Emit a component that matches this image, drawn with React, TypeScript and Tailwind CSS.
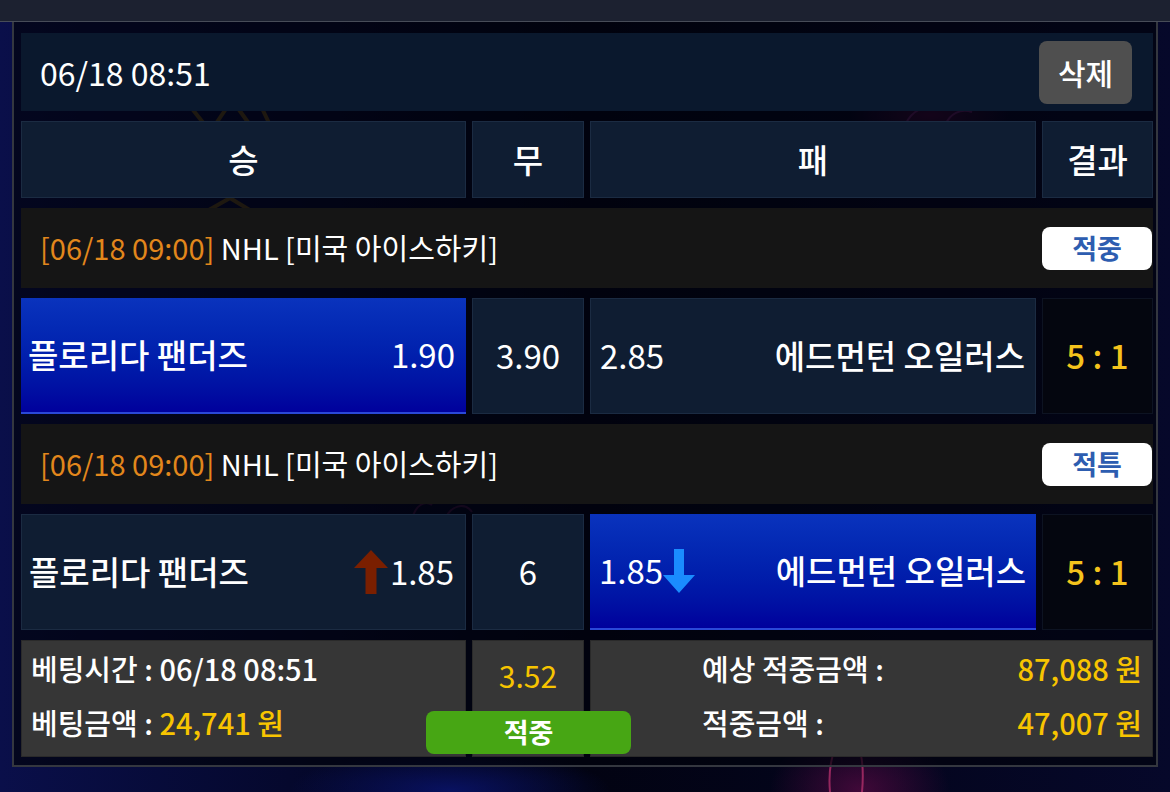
import React from 'react';

const FONT = { fontFamily: '"Noto Sans CJK KR", "Noto Sans", sans-serif' };

type Match = {
    time: string;
    league: string;
    badge: string;
    home: string;
    homeOdds: string;
    draw: string;
    away: string;
    awayOdds: string;
    score: string;
    pick: 'home' | 'away';
    homeArrow?: 'up' | 'down';
    awayArrow?: 'up' | 'down';
};

const matches: Match[] = [
    { time: '[06/18 09:00]', league: 'NHL [미국 아이스하키]', badge: '적중', home: '플로리다 팬더즈', homeOdds: '1.90', draw: '3.90', away: '에드먼턴 오일러스', awayOdds: '2.85', score: '5 : 1', pick: 'home' },
    { time: '[06/18 09:00]', league: 'NHL [미국 아이스하키]', badge: '적특', home: '플로리다 팬더즈', homeOdds: '1.85', draw: '6', away: '에드먼턴 오일러스', awayOdds: '1.85', score: '5 : 1', pick: 'away', homeArrow: 'up', awayArrow: 'down' },
];

function ArrowUp() {
    return (
        <svg width="34" height="44" viewBox="0 0 34 44" className="shrink-0 mr-[2px]">
            <path d="M17 0 L34 18 L22.5 18 L22.5 44 L11.5 44 L11.5 18 L0 18 Z" fill="#7a1f00" />
        </svg>
    );
}

function ArrowDown() {
    return (
        <svg width="32" height="44" viewBox="0 0 32 44" className="shrink-0">
            <path d="M11 0 L21 0 L21 26 L32 26 L16 44 L0 26 L11 26 Z" fill="#1a8cff" />
        </svg>
    );
}

const selectedCls = 'bg-gradient-to-b from-[#0a33bd] to-[#00009c] border-b-2 border-[#2a48d8]';
const plainCls = 'bg-[#0f1d32] border border-[#1b2b42]';

function MatchBlock({ m }: { m: Match }) {
    return (
        <>
            <div className="h-[80px] bg-[#151515] flex items-center justify-between pl-[19px] pr-[1px]">
                <div className="text-[29px] text-white">
                    <span className="text-[#e2871c]">{m.time}</span> {m.league}
                </div>
                <div className="w-[110px] h-[43px] rounded-[8px] bg-white flex items-center justify-center text-[27px] font-bold text-[#2d5db0]">
                    {m.badge}
                </div>
            </div>
            <div className="grid grid-cols-[445px_112px_446px_111px] gap-x-[6px] h-[116px]">
                <div className={`${m.pick === 'home' ? selectedCls : plainCls} flex items-center justify-between pl-[7px] pr-[11px] text-white`}>
                    <span className="text-[33px] font-medium">{m.home}</span>
                    <span className="flex items-center text-[33px]">
                        {m.homeArrow === 'up' && <ArrowUp />}
                        {m.homeOdds}
                    </span>
                </div>
                <div className={`${plainCls} flex items-center justify-center text-white text-[33px]`}>{m.draw}</div>
                <div className={`${m.pick === 'away' ? selectedCls : plainCls} flex items-center justify-between pl-[9px] pr-[10px] text-white`}>
                    <span className="flex items-center text-[33px]">
                        {m.awayOdds}
                        {m.awayArrow === 'down' && <ArrowDown />}
                    </span>
                    <span className="text-[33px] font-medium">{m.away}</span>
                </div>
                <div className="bg-[#04060f] border border-[#0d1322] flex items-center justify-center text-[33px] font-medium text-[#f5c31c]">
                    {m.score}
                </div>
            </div>
        </>
    );
}

function Backdrop() {
    return (
        <svg className="absolute inset-0 pointer-events-none" width="1170" height="792" viewBox="0 0 1170 792">
            <defs>
                <radialGradient id="glowPink" cx="0.5" cy="0.5" r="0.5">
                    <stop offset="0" stopColor="#5a0a44" stopOpacity="0.7" />
                    <stop offset="1" stopColor="#5a0a44" stopOpacity="0" />
                </radialGradient>
                <radialGradient id="glowBlue" cx="0.5" cy="0.5" r="0.5">
                    <stop offset="0" stopColor="#0a1470" stopOpacity="0.8" />
                    <stop offset="1" stopColor="#0a1470" stopOpacity="0" />
                </radialGradient>
            </defs>
            <ellipse cx="860" cy="790" rx="90" ry="60" fill="url(#glowPink)" />
            <ellipse cx="450" cy="790" rx="160" ry="40" fill="url(#glowBlue)" />
            <ellipse cx="930" cy="115" rx="80" ry="30" fill="url(#glowPink)" />
            <path d="M185 100 L205 125 M215 125 L232 100 L250 125 M258 100 L270 125" stroke="#8a6a10" strokeWidth="4" fill="none" opacity="0.7" />
            <path d="M200 215 L230 198 L258 215" stroke="#8a6a10" strokeWidth="4" fill="none" opacity="0.7" />
            <path d="M830 792 C 828 770 832 755 836 745 M862 792 C 864 770 862 755 858 745" stroke="#b0306a" strokeWidth="2" fill="none" opacity="0.8" />
            <path d="M905 125 C 912 110 925 104 940 108 M945 125 C 950 114 960 108 972 112" stroke="#7a2a7a" strokeWidth="2" fill="none" opacity="0.7" />
            <path d="M412 520 C 415 505 425 500 432 505 M445 520 C 450 505 465 502 472 512" stroke="#5a1a50" strokeWidth="2" fill="none" opacity="0.7" />
        </svg>
    );
}

export default function App() {
    return (
        <div className="relative w-[1170px] h-[792px] overflow-hidden bg-[#020312]" style={FONT}>
            <div className="absolute inset-0 bg-gradient-to-r from-[#0a0f4a] via-[#020312] to-[#06082a]" />
            <Backdrop />
            <div className="relative">
                <div className="h-[22px] bg-[#1c2130] border-b border-[#474c58]" />
                <div className="ml-[12px] w-[1146px] border-l-2 border-r-2 border-b-2 border-[#34373f] bg-[#02030d]/70 pt-[11px] pl-[7px] pr-[3px] pb-[8px] flex flex-col gap-[10px]">
                    <div className="h-[78px] bg-[#0a182d] flex items-center justify-between pl-[19px] pr-[21px]">
                        <span className="text-[32px] text-white">06/18 08:51</span>
                        <button className="w-[93px] h-[63px] rounded-[8px] bg-[#4f4f4f] text-white text-[30px] font-medium">삭제</button>
                    </div>
                    <div className="grid grid-cols-[445px_112px_446px_111px] gap-x-[6px] h-[77px]">
                        {['승', '무', '패', '결과'].map(h => (
                            <div key={h} className={`${plainCls} flex items-center justify-center text-white text-[33px] font-medium`}>{h}</div>
                        ))}
                    </div>
                    {matches.map((m, i) => <MatchBlock key={i} m={m} />)}
                    <div className="relative grid grid-cols-[445px_112px_446px_111px] gap-x-[6px] h-[117px]">
                        <div className="bg-[#363636] border border-[#2a2a2a] flex flex-col pt-[7px] gap-[14px] pl-[9px] text-white text-[29px] font-medium">
                            <div className="leading-[40px]">베팅시간 : 06/18 08:51</div>
                            <div className="leading-[40px]">베팅금액 : <span className="text-[#f7c400]">24,741 원</span></div>
                        </div>
                        <div className="bg-[#363636] border border-[#2a2a2a] flex justify-center pt-[14px] text-[30px] leading-[40px] text-[#f7c400]">3.52</div>
                        <div className="col-span-2 bg-[#363636] border border-[#2a2a2a] flex flex-col pt-[7px] gap-[14px] pl-[111px] pr-[10px] text-[29px] font-medium">
                            <div className="flex justify-between leading-[40px]">
                                <span className="text-white">예상 적중금액 :</span>
                                <span className="text-[#f7c400]">87,088 원</span>
                            </div>
                            <div className="flex justify-between leading-[40px]">
                                <span className="text-white">적중금액 :</span>
                                <span className="text-[#f7c400]">47,007 원</span>
                            </div>
                        </div>
                        <div className="absolute left-[405px] top-[71px] w-[205px] h-[43px] rounded-[8px] bg-[#47a614] flex items-center justify-center text-white text-[27px] font-bold">
                            적중
                        </div>
                    </div>
                </div>
            </div>
        </div>
    );
}
